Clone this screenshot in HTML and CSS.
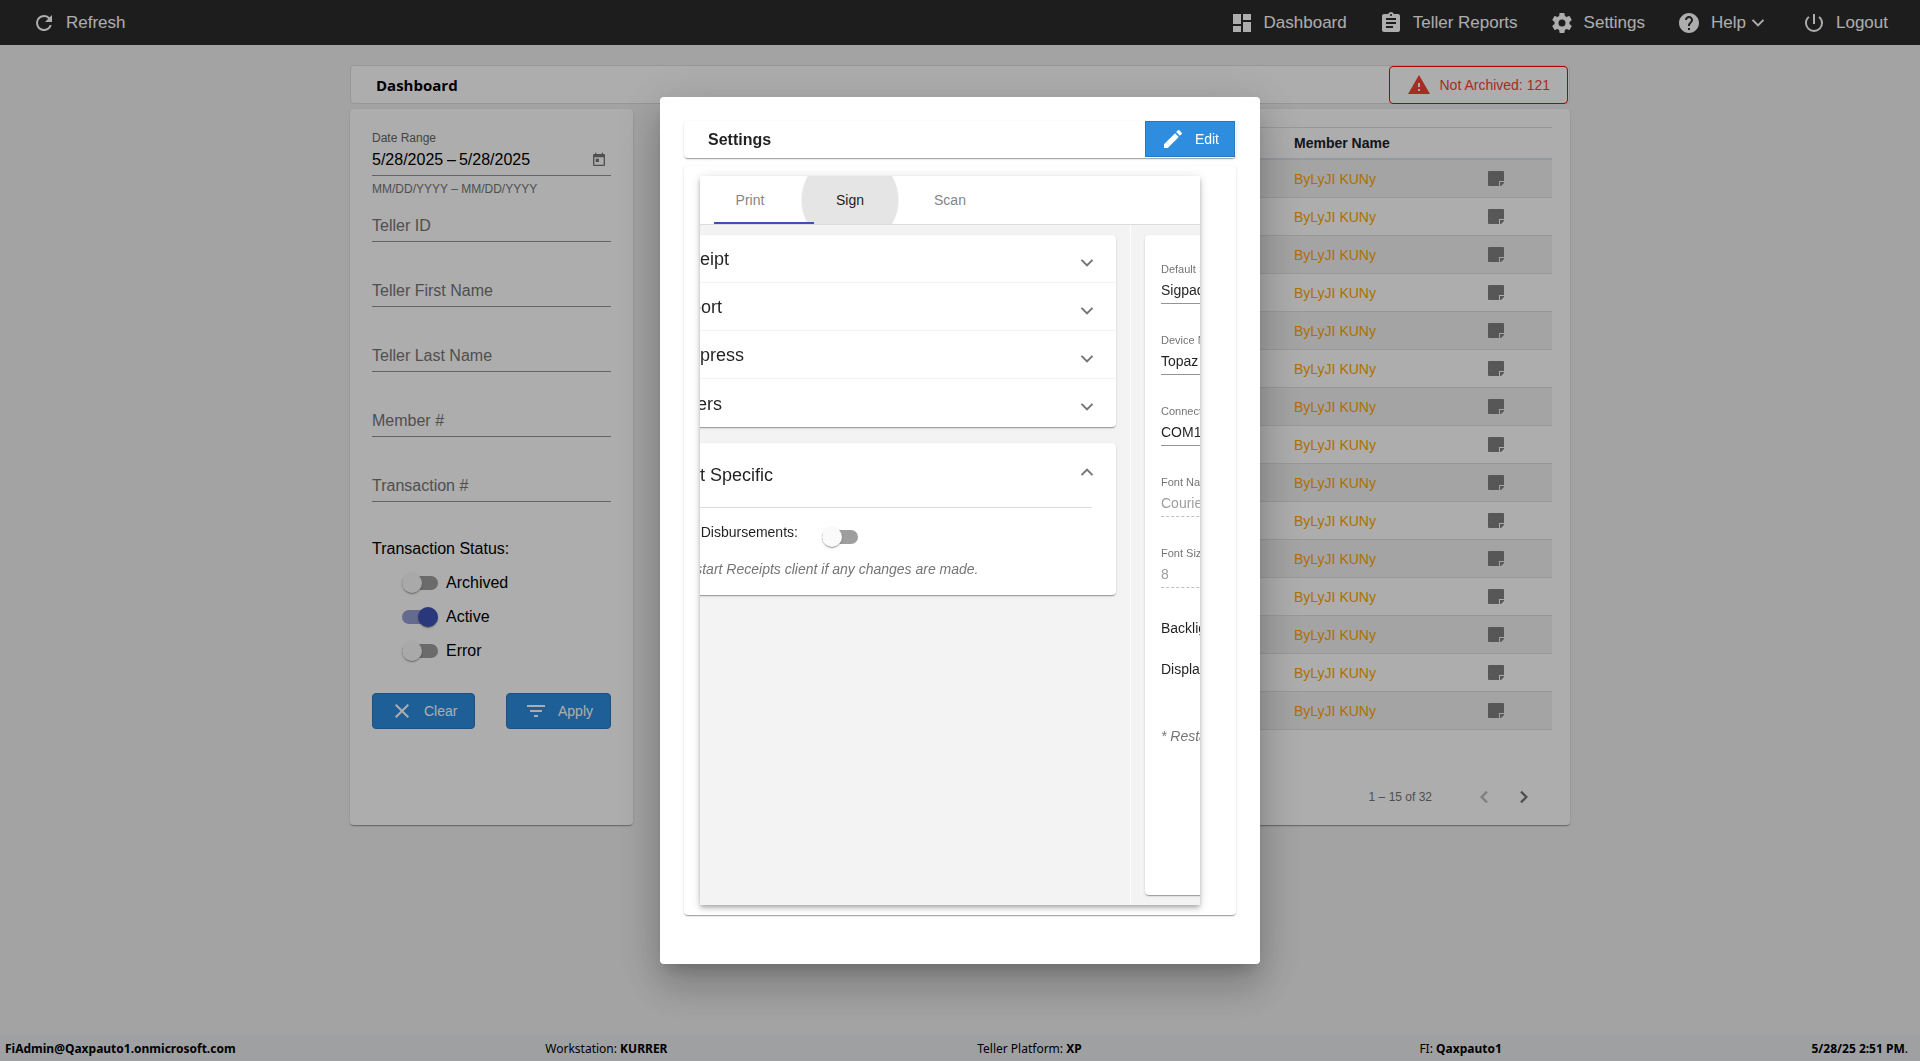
FILE: index.html
```html
<!DOCTYPE html>
<html lang="en">
<head>
  <meta charset="UTF-8">
  <meta name="viewport" content="width=device-width, initial-scale=1.0">
  <title>Dashboard</title>
  <link rel="stylesheet" href="styles.css">
</head>
<body>
  <svg class="sprite" aria-hidden="true">
    <symbol id="i-refresh" viewBox="0 0 24 24"><path d="M17.65 6.35A7.96 7.96 0 0 0 12 4a8 8 0 1 0 7.73 10h-2.08A6 6 0 1 1 12 6c1.66 0 3.14.69 4.22 1.78L13 11h7V4z"/></symbol>
    <symbol id="i-dashboard" viewBox="0 0 24 24"><path d="M3 13h8V3H3v10zm0 8h8v-6H3v6zm10 0h8V11h-8v10zm0-18v6h8V3h-8z"/></symbol>
    <symbol id="i-report" viewBox="0 0 24 24"><path d="M19 3h-4.18C14.4 1.84 13.3 1 12 1s-2.4.84-2.82 2H5c-1.1 0-2 .9-2 2v14c0 1.1.9 2 2 2h14c1.1 0 2-.9 2-2V5c0-1.1-.9-2-2-2zm-7 0c.55 0 1 .45 1 1s-.45 1-1 1-1-.45-1-1 .45-1 1-1zm2 14H7v-2h7v2zm3-4H7v-2h10v2zm0-4H7V7h10v2z"/></symbol>
    <symbol id="i-settings" viewBox="0 0 24 24"><path d="M19.43 12.98c.04-.32.07-.64.07-.98s-.03-.66-.07-.98l2.11-1.65c.19-.15.24-.42.12-.64l-2-3.46c-.12-.22-.39-.3-.61-.22l-2.49 1c-.52-.4-1.08-.73-1.69-.98l-.38-2.65A.49.49 0 0 0 14 2h-4c-.25 0-.46.18-.49.42l-.38 2.65c-.61.25-1.17.59-1.69.98l-2.49-1c-.23-.09-.49 0-.61.22l-2 3.46c-.13.22-.07.49.12.64l2.11 1.65c-.04.32-.07.65-.07.98s.03.66.07.98l-2.11 1.65c-.19.15-.24.42-.12.64l2 3.46c.12.22.39.3.61.22l2.49-1c.52.4 1.08.73 1.69.98l.38 2.65c.03.24.24.42.49.42h4c.25 0 .46-.18.49-.42l.38-2.65c.61-.25 1.17-.59 1.69-.98l2.49 1c.23.09.49 0 .61-.22l2-3.46c.12-.22.07-.49-.12-.64l-2.11-1.65zM12 15.500a3.500 3.500 0 1 1 0-7 3.500 3.500 0 0 1 0 7z"/></symbol>
    <symbol id="i-help" viewBox="0 0 24 24"><path d="M12 2C6.480 2 2 6.480 2 12s4.480 10 10 10 10-4.480 10-10S17.520 2 12 2zm1 17h-2v-2h2v2zm2.070-7.750l-.9.920C13.450 12.900 13 13.500 13 15h-2v-.5c0-1.100.45-2.100 1.170-2.830l1.240-1.260c.37-.36.59-.86.59-1.410 0-1.100-.9-2-2-2s-2 .9-2 2H8c0-2.210 1.790-4 4-4s4 1.790 4 4c0 .88-.36 1.680-.93 2.250z"/></symbol>
    <symbol id="i-power" viewBox="0 0 24 24"><path d="M13 3h-2v10h2V3zm4.830 2.170l-1.420 1.420A6.920 6.920 0 0 1 19 12c0 3.870-3.130 7-7 7s-7-3.130-7-7c0-2.190 1.010-4.140 2.580-5.420L6.170 5.170A8.930 8.930 0 0 0 3 12a9 9 0 0 0 18 0c0-2.740-1.230-5.180-3.170-6.830z"/></symbol>
    <symbol id="i-down" viewBox="0 0 24 24"><path d="M7.200 8.200L12 13l4.800-4.800L18.200 9.600 12 15.800 5.800 9.600z"/></symbol>
    <symbol id="i-up" viewBox="0 0 24 24"><path d="M7.200 15.800L12 11l4.800 4.800L18.200 14.400 12 8.200 5.800 14.400z"/></symbol>
    <symbol id="i-left" viewBox="0 0 24 24"><path d="M15.800 7.400L14.200 5.800 8 12l6.200 6.200 1.600-1.600L11.200 12z"/></symbol>
    <symbol id="i-right" viewBox="0 0 24 24"><path d="M8.200 7.400L9.800 5.800 16 12l-6.200 6.200-1.600-1.600L12.800 12z"/></symbol>
    <symbol id="i-warning" viewBox="0 0 24 24"><path d="M1 21h22L12 2 1 21zm12-3h-2v-2h2v2zm0-4h-2v-4h2v4z"/></symbol>
    <symbol id="i-calendar" viewBox="0 0 24 24"><path d="M19 3h-1V1h-2v2H8V1H6v2H5c-1.110 0-1.990.9-1.990 2L3 19c0 1.100.89 2 2 2h14c1.100 0 2-.9 2-2V5c0-1.100-.9-2-2-2zm0 16H5V8h14v11zM7 10h5v5H7z"/></symbol>
    <symbol id="i-close" viewBox="0 0 24 24"><path d="M19 6.410L17.590 5 12 10.590 6.410 5 5 6.410 10.590 12 5 17.590 6.410 19 12 13.410 17.590 19 19 17.590 13.410 12z"/></symbol>
    <symbol id="i-filter" viewBox="0 0 24 24"><path d="M10 18h4v-2h-4v2zM3 6v2h18V6H3zm3 7h12v-2H6v2z"/></symbol>
    <symbol id="i-edit" viewBox="0 0 24 24"><path d="M3 17.250V21h3.750L17.810 9.940l-3.750-3.750L3 17.250zM20.710 7.040a1 1 0 0 0 0-1.410l-2.340-2.340a1 1 0 0 0-1.410 0l-1.830 1.830 3.750 3.750 1.830-1.830z"/></symbol>
    <symbol id="i-note" viewBox="0 0 16 16"><path d="M0 1Q0 0 1 0H15Q16 0 16 1V10H11V15H1Q0 15 0 14zM12 11H16V12L13 15H12z"/></symbol>
  </svg>

  <header class="toolbar">
    <button class="nav-btn"><svg class="icon"><use href="#i-refresh"/></svg>Refresh</button>
    <nav class="nav">
      <a class="nav-btn" href="#"><svg class="icon"><use href="#i-dashboard"/></svg>Dashboard</a>
      <a class="nav-btn" href="#"><svg class="icon"><use href="#i-report"/></svg>Teller Reports</a>
      <a class="nav-btn" href="#"><svg class="icon"><use href="#i-settings"/></svg>Settings</a>
      <button class="nav-btn"><svg class="icon"><use href="#i-help"/></svg><span class="nav-menu">Help<svg class="icon"><use href="#i-down"/></svg></span></button>
      <a class="nav-btn" href="#"><svg class="icon"><use href="#i-power"/></svg>Logout</a>
    </nav>
  </header>

  <main class="page">
    <div class="page-title">
      <h1>Dashboard</h1>
      <button class="btn btn-warn"><svg class="icon"><use href="#i-warning"/></svg>Not Archived: 121</button>
    </div>

    <div class="columns">
      <form class="card filters">
        <div class="date-range">
          <label class="date-label" for="dateFrom">Date Range</label>
          <div class="date-row">
            <input type="text" id="dateFrom" value="5/28/2025">
            <span>–</span>
            <input type="text" aria-label="End date" value="5/28/2025">
            <button type="button" class="icon-btn date-btn" aria-label="Open calendar"><svg class="icon-sm"><use href="#i-calendar"/></svg></button>
          </div>
          <div class="date-hint">MM/DD/YYYY – MM/DD/YYYY</div>
        </div>

        <input class="field" type="text" placeholder="Teller ID" aria-label="Teller ID">
        <input class="field" type="text" placeholder="Teller First Name" aria-label="Teller First Name">
        <input class="field" type="text" placeholder="Teller Last Name" aria-label="Teller Last Name">
        <input class="field" type="text" placeholder="Member #" aria-label="Member #">
        <input class="field" type="text" placeholder="Transaction #" aria-label="Transaction #">

        <fieldset class="status">
          <legend>Transaction Status:</legend>
          <label class="status-row"><input class="toggle" type="checkbox">Archived</label>
          <label class="status-row"><input class="toggle" type="checkbox" checked>Active</label>
          <label class="status-row"><input class="toggle" type="checkbox">Error</label>
        </fieldset>

        <div class="filter-actions">
          <button type="button" class="btn btn-primary"><svg class="icon"><use href="#i-close"/></svg>Clear</button>
          <button type="button" class="btn btn-primary"><svg class="icon"><use href="#i-filter"/></svg>Apply</button>
        </div>
      </form>

      <section class="card results">
        <table class="grid">
          <colgroup><col><col class="col-name"><col class="col-note"></colgroup>
          <thead>
            <tr><th></th><th>Member Name</th><th></th></tr>
          </thead>
          <tbody id="rows"></tbody>
        </table>
        <div class="paginator">
          <span>1 – 15 of 32</span>
          <button class="icon-btn" aria-label="Previous page" disabled><svg class="icon"><use href="#i-left"/></svg></button>
          <button class="icon-btn" aria-label="Next page"><svg class="icon"><use href="#i-right"/></svg></button>
        </div>
      </section>
    </div>
  </main>

  <footer class="statusbar">
    <b>FiAdmin@Qaxpauto1.onmicrosoft.com</b>
    <span>Workstation: <b>KURRER</b></span>
    <span>Teller Platform: <b>XP</b></span>
    <span class="fi">FI: <b>Qaxpauto1</b></span>
    <span><b>5/28/25 2:51 PM</b>.</span>
  </footer>

  <div class="overlay">
    <div class="dialog" role="dialog" aria-labelledby="dialogTitle">
      <div class="card dialog-title">
        <h2 id="dialogTitle">Settings</h2>
        <button class="btn btn-primary btn-edit"><svg class="icon"><use href="#i-edit"/></svg>Edit</button>
      </div>

      <div class="card dialog-body">
        <div class="tabs">
          <div class="tab-header" role="tablist">
            <button class="tab" role="tab">Print</button>
            <button class="tab active" role="tab">Sign</button>
            <button class="tab" role="tab">Scan</button>
            <span class="ink-bar"></span>
          </div>

          <!-- both tab pages sit side by side, shifted while sliding -->
          <div class="tab-track">
            <div class="tab-page">
              <div class="card accordion">
                <button class="panel-head">Receipt<svg class="icon"><use href="#i-down"/></svg></button>
                <button class="panel-head">Report<svg class="icon"><use href="#i-down"/></svg></button>
                <button class="panel-head">Suppress<svg class="icon"><use href="#i-down"/></svg></button>
                <button class="panel-head">Others<svg class="icon"><use href="#i-down"/></svg></button>
              </div>
              <div class="card host">
                <button class="panel-head open">Host Specific<svg class="icon"><use href="#i-up"/></svg></button>
                <div class="host-row">
                  <label for="disb">Print Disbursements:</label>
                  <input class="toggle" type="checkbox" id="disb">
                </div>
                <p class="note">* Restart Receipts client if any changes are made.</p>
              </div>
            </div>

            <div class="tab-page">
              <div class="card sign">
                <div class="form-field">
                  <label for="sigpad">Default Sigpad</label>
                  <select id="sigpad"><option>Sigpad</option></select>
                </div>
                <div class="form-field">
                  <label for="model">Device Model</label>
                  <select id="model"><option>Topaz</option></select>
                </div>
                <div class="form-field">
                  <label for="port">Connection</label>
                  <select id="port"><option>COM1</option></select>
                </div>
                <div class="form-field">
                  <label for="fontName">Font Name</label>
                  <input type="text" id="fontName" value="Courier" disabled>
                </div>
                <div class="form-field">
                  <label for="fontSize">Font Size</label>
                  <input type="text" id="fontSize" value="8" disabled>
                </div>
                <p class="sign-row">Backlight</p>
                <p class="sign-row">Display</p>
                <p class="note">* Restart</p>
              </div>
            </div>
          </div>
        </div>
      </div>
    </div>
  </div>

  <script>
    const rows = document.getElementById('rows');
    for (let i = 0; i < 15; i++) {
      const tr = document.createElement('tr');
      tr.innerHTML = '<td></td><td>ByLyJI KUNy</td>' +
        '<td><button class="note-btn" aria-label="Notes"><svg class="icon-note"><use href="#i-note"/></svg></button></td>';
      rows.appendChild(tr);
    }
  </script>
</body>
</html>
```
FILE: styles.css
```css
* {
  box-sizing: border-box;
}

body {
  margin: 0;
  min-height: 100vh;
  display: flex;
  flex-direction: column;
  font-family: "Liberation Sans", Arial, sans-serif;
  font-size: 14px;
  background-color: #f1f1f1;
}

button, input, select {
  font-family: inherit;
  font-size: inherit;
  color: inherit;
  margin: 0;
}

button {
  cursor: pointer;
}

h1, h2, p {
  margin: 0;
}

.sprite {
  position: absolute;
  width: 0;
  height: 0;
}

.icon {
  width: 24px;
  height: 24px;
  flex: none;
  fill: currentColor;
}

.icon-sm {
  width: 16px;
  height: 16px;
  fill: currentColor;
}

.icon-note {
  width: 16px;
  height: 16px;
  display: block;
  fill: #808080;
}

.icon-btn {
  display: flex;
  align-items: center;
  justify-content: center;
  width: 40px;
  height: 40px;
  padding: 0;
  border: none;
  background: none;
}

/* toolbar */
.toolbar {
  display: flex;
  justify-content: space-between;
  height: 45px;
  padding: 0 16px;
  background-color: #2b2b2b;
  color: #fff;
}

.nav {
  display: flex;
}

.nav-btn {
  display: flex;
  align-items: center;
  gap: 10px;
  padding: 0 16px;
  border: none;
  background: none;
  color: #fff;
  font-size: 17px;
  text-decoration: none;
}

.nav-menu {
  display: flex;
  align-items: center;
}

/* cards and buttons */
.card {
  background-color: #fff;
  border-radius: 4px;
  box-shadow: 0 2px 1px -1px rgba(0, 0, 0, 0.2), 0 1px 1px 0 rgba(0, 0, 0, 0.14), 0 1px 3px 0 rgba(0, 0, 0, 0.12);
}

.btn {
  display: flex;
  align-items: center;
  gap: 10px;
  height: 36px;
  padding: 0 17px;
  border-radius: 4px;
  border: 1px solid #2878be;
  font-size: 14px;
}

.btn-primary {
  background-color: #2f8ddf;
  color: #fff;
}

.btn-warn {
  gap: 8px;
  height: 38px;
  margin-right: 1px;
  border-color: #f00;
  background: none;
  color: #f44336;
}

.btn-edit {
  padding: 0 15px;
  border-radius: 0;
}

/* page */
.page {
  flex: 1;
  width: 100%;
  max-width: 1220px;
  margin: 0 auto;
  padding-top: 20px;
}

.page-title {
  display: flex;
  align-items: center;
  justify-content: space-between;
  height: 39px;
  padding-left: 25px;
  background-color: #fff;
  border: 1px solid #dedede;
  border-radius: 4px;
}

.page-title h1 {
  font-family: "Segoe UI", "Open Sans", sans-serif;
  font-size: 15px;
  font-weight: 700;
  color: #000;
}

.columns {
  display: flex;
  gap: 32px;
  margin-top: 5px;
}

.filters {
  width: 283px;
  padding: 22px 22px 0;
  font-size: 16px;
}

.date-range {
  display: flex;
  flex-direction: column;
  height: 78px;
}

.date-label {
  font-size: 12px;
  line-height: 14px;
  color: #666;
}

.date-row {
  display: flex;
  align-items: center;
  gap: 3px;
  height: 31px;
  border-bottom: 1px solid #949494;
}

.date-row input {
  width: 72px;
  padding: 0;
  border: none;
  background: none;
}

.date-btn {
  width: 24px;
  height: 30px;
  margin-left: auto;
  color: #757575;
}

.date-hint {
  margin-top: 5px;
  font-size: 12px;
  line-height: 16px;
  color: #757575;
}

.field {
  display: block;
  width: 100%;
  height: 33px;
  margin-bottom: 32px;
  padding: 2px 0 0;
  border: none;
  border-bottom: 1px solid #949494;
  background: none;
}

.field::placeholder {
  color: #757575;
}

.status {
  margin: 0;
  padding: 2px 0 0;
  border: none;
}

.status legend {
  padding: 0;
  line-height: 30px;
}

.status-row {
  display: flex;
  align-items: center;
  gap: 8px;
  height: 34px;
  margin-left: 30px;
}

.toggle {
  appearance: none;
  flex: none;
  display: flex;
  align-items: center;
  width: 36px;
  height: 14px;
  border-radius: 8px;
  background-color: #9e9e9e;
}

.toggle::before {
  content: "";
  width: 20px;
  height: 20px;
  border-radius: 50%;
  background-color: #fafafa;
  box-shadow: 0 2px 1px -1px rgba(0, 0, 0, 0.2), 0 1px 1px 0 rgba(0, 0, 0, 0.14), 0 1px 3px 0 rgba(0, 0, 0, 0.12);
}

.toggle:checked {
  justify-content: flex-end;
  background-color: #949ed3;
}

.toggle:checked::before {
  background-color: #3f51b5;
}

.filter-actions {
  display: flex;
  justify-content: space-between;
  margin-top: 25px;
}

.results {
  flex: 1;
  padding: 18px 18px 0;
}

.grid {
  width: 100%;
  table-layout: fixed;
  border-collapse: separate;
  border-spacing: 0;
  border-top: 1px solid #dee2e6;
}

.col-name {
  width: 158px;
}

.col-note {
  width: 112px;
}

.grid th {
  height: 32px;
  padding: 0 12px;
  text-align: left;
  border-bottom: 2px solid #dee2e6;
  color: #212121;
}

.grid td {
  height: 38px;
  padding: 0 12px;
  border-bottom: 1px solid #dee2e6;
  color: #ffa500;
}

.grid tbody tr:nth-child(odd) {
  background-color: #f2f2f2;
}

.note-btn {
  display: block;
  margin: 0 auto;
  padding: 0;
  border: none;
  background: none;
}

.paginator {
  display: flex;
  align-items: center;
  justify-content: flex-end;
  height: 56px;
  margin-top: 39px;
  padding-right: 8px;
  font-size: 12px;
  color: #757575;
}

.paginator span {
  margin-right: 32px;
}

.paginator .icon-btn:disabled {
  color: #bdbdbd;
}

/* status bar */
.statusbar {
  display: flex;
  align-items: center;
  justify-content: space-between;
  height: 26px;
  padding: 0 12px 0 5px;
  background-color: #e9ecef;
  color: #000;
  font-family: "Segoe UI", "Noto Sans", sans-serif;
  font-size: 12px;
}

.fi {
  padding-left: 28px;
}

/* settings dialog */
.overlay {
  position: fixed;
  inset: 0;
  display: flex;
  align-items: center;
  justify-content: center;
  background-color: rgba(0, 0, 0, 0.32);
}

.dialog {
  width: 600px;
  max-width: 80vw;
  padding: 24px 24px 49px;
  border-radius: 4px;
  background-color: #fff;
  color: rgba(0, 0, 0, 0.87);
  box-shadow: 0 11px 15px -7px rgba(0, 0, 0, 0.2), 0 24px 38px 3px rgba(0, 0, 0, 0.14), 0 9px 46px 8px rgba(0, 0, 0, 0.12);
}

.dialog-title {
  display: flex;
  align-items: flex-start;
  justify-content: space-between;
  height: 37px;
  padding: 0 1px 0 24px;
}

.dialog-title h2 {
  font-size: 16px;
  line-height: 37px;
}

.dialog-body {
  margin-top: 8px;
  padding: 10px 36px 10px 16px;
}

.tabs {
  overflow: hidden;
  background-color: #f3f3f3;
  box-shadow: 0 2px 4px -1px rgba(0, 0, 0, 0.2), 0 4px 5px 0 rgba(0, 0, 0, 0.14), 0 1px 10px 0 rgba(0, 0, 0, 0.12);
}

.tab-header {
  position: relative;
  display: flex;
  height: 49px;
  background-color: #fff;
  border-bottom: 1px solid #dcdcdc;
}

.tab {
  width: 100px;
  padding: 0;
  border: none;
  background: none;
  color: #858585;
}

.tab.active {
  color: #212121;
  background: radial-gradient(circle, #e5e5e5 48px, transparent 49px);
}

.ink-bar {
  position: absolute;
  left: 14px;
  bottom: 0;
  width: 100px;
  height: 2px;
  background-color: #3f51b5;
}

.tab-track {
  display: flex;
  margin-left: -70px;
}

.tab-page {
  flex: none;
  display: flex;
  flex-direction: column;
  gap: 16px;
  width: 501px;
  min-height: 680px;
  padding: 10px 14px;
  border-right: 1px solid #fff;
}

.panel-head {
  display: flex;
  align-items: center;
  justify-content: space-between;
  width: 100%;
  height: 48px;
  padding: 2px 17px 0 24px;
  border: none;
  border-bottom: 1px solid #f3f3f3;
  background: none;
  font-size: 18px;
}

.panel-head:last-child {
  border-bottom: none;
}

.panel-head .icon {
  margin-top: 6px;
  color: #757575;
}

.host {
  height: 152px;
  padding: 0 24px;
}

.panel-head.open {
  height: 65px;
  padding: 0;
  border-color: #dedede;
}

.host .icon {
  margin: 0 -7px 6px 0;
}

.host-row {
  display: flex;
  gap: 24px;
  padding-top: 16px;
}

.host-row .toggle {
  margin-top: 6px;
}

.note {
  color: #757575;
  font-style: italic;
}

.host .note {
  margin-top: 17px;
}

.sign {
  flex: 1;
  padding: 27px 16px;
}

.form-field {
  display: flex;
  flex-direction: column;
  height: 71px;
}

.form-field label {
  font-size: 11px;
  line-height: 14px;
  color: #757575;
}

.form-field select,
.form-field input {
  appearance: none;
  width: 200px;
  height: 28px;
  padding: 0;
  border: none;
  border-bottom: 1px solid #949494;
  border-radius: 0;
  background: none;
}

.form-field input:disabled {
  border-bottom-style: dashed;
  border-color: #c0c0c0;
  color: #9e9e9e;
}

.sign-row {
  height: 41px;
  line-height: 22px;
}

.sign .note {
  margin-top: 29px;
}
```
